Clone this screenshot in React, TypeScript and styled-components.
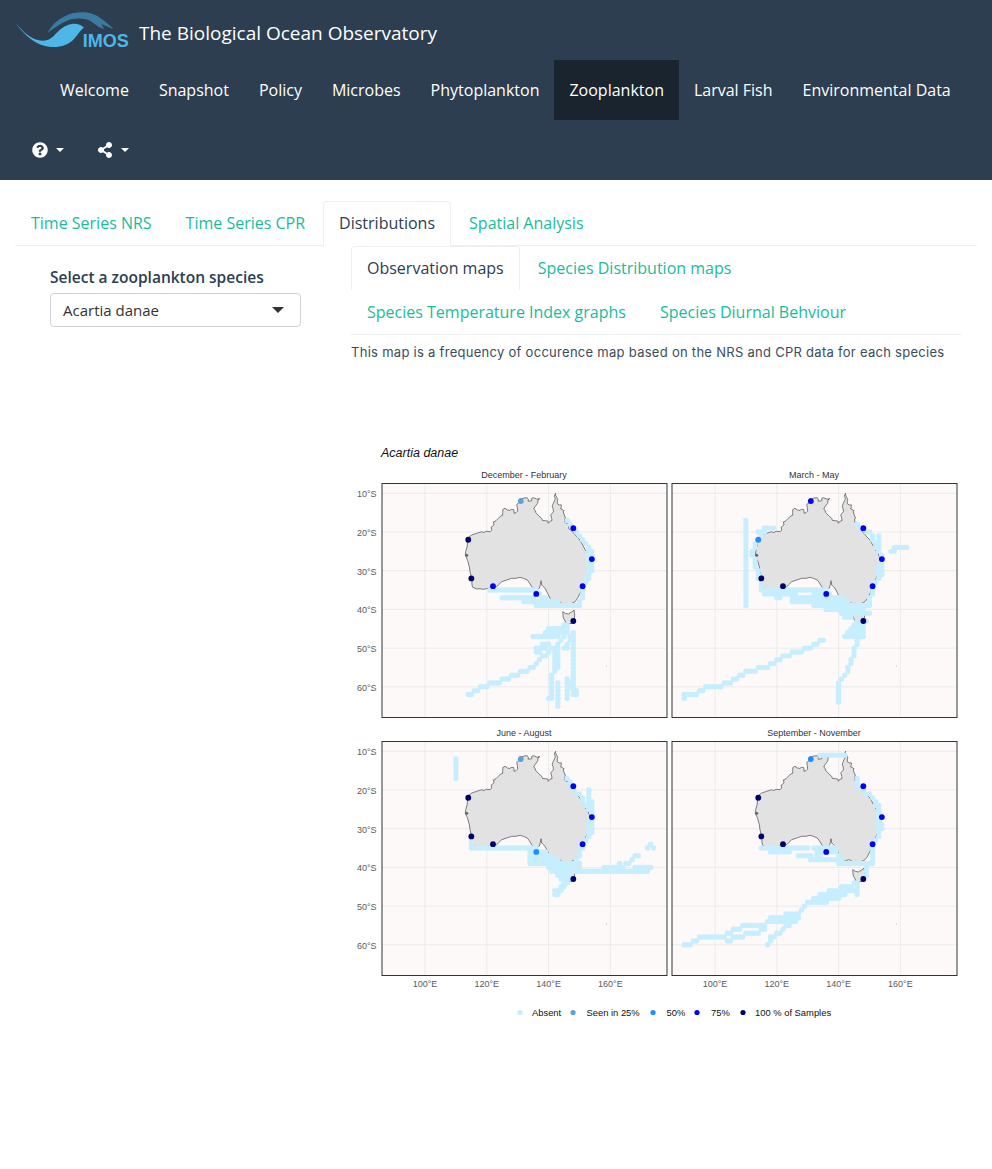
import { createGlobalStyle, styled } from "styled-components";
import { FaQuestionCircle, FaShareAlt } from "react-icons/fa";

const GlobalStyle = createGlobalStyle`
  html, body {
    margin: 0;
    padding: 0;
    background: #fff;
    font-family: "Open Sans", "Liberation Sans", sans-serif;
    font-size: 16px;
    color: #2c3e50;
  }
`;

const Header = styled.header`
  background: #2c3e50;
  height: 180px;
`;

const BrandRow = styled.div`
  display: flex;
  align-items: flex-start;
  height: 60px;
  padding: 5px 0 0 10px;
  box-sizing: border-box;
`;

const BrandTitle = styled.span`
  margin: 14px 0 0 4px;
  font-size: 19px;
  line-height: 28px;
  color: #fff;
`;

const NavRow = styled.nav`
  display: flex;
  height: 60px;
  padding-left: 45px;
`;

const NavLink = styled.a<{ $active?: boolean }>`
  padding: 0 15px;
  line-height: 60px;
  font-size: 16px;
  color: #fff;
  background: ${({ $active }) => ($active ? "#1a242f" : "transparent")};
`;

const IconRow = styled.div`
  display: flex;
  height: 60px;
  padding-left: 17px;
`;

const IconItem = styled.a`
  display: flex;
  align-items: center;
  gap: 8px;
  width: 65px;
  padding-left: 15px;
  box-sizing: border-box;
  color: #fff;
  font-size: 16px;
`;

const Caret = styled.span`
  width: 0;
  height: 0;
  border-left: 4px solid transparent;
  border-right: 4px solid transparent;
  border-top: 4px solid #fff;
`;

const Content = styled.main`
  padding: 21px 15px 0;
`;

const TabRow = styled.div`
  display: flex;
  gap: 2px;
  border-bottom: 1px solid #ecf0f1;
`;

const SubTabRow = styled.div`
  display: flex;
  flex-wrap: wrap;
  column-gap: 2px;
  border-bottom: 1px solid #ecf0f1;
`;

const Tab = styled.a<{ $active?: boolean }>`
  padding: 9px 15px;
  margin-bottom: -1px;
  font-size: 16px;
  line-height: 25px;
  border: 1px solid ${({ $active }) => ($active ? "#ecf0f1" : "transparent")};
  border-bottom-color: ${({ $active }) => ($active ? "#fff" : "transparent")};
  border-radius: 4px 4px 0 0;
  background: ${({ $active }) => ($active ? "#fff" : "transparent")};
  color: ${({ $active }) => ($active ? "#2c3e50" : "#18bc9c")};
`;

const SubTab = styled(Tab)`
  height: 44px;
  box-sizing: border-box;
  margin-bottom: 0;
`;

const Columns = styled.div`
  display: flex;
`;

const Sidebar = styled.aside`
  width: 336px;
  box-sizing: border-box;
  padding: 19px 0 0 35px;
`;

const FieldLabel = styled.div`
  font-size: 15.5px;
  font-weight: 600;
  line-height: 24px;
  margin-bottom: 4px;
  color: #2c3e50;
`;

const SelectBox = styled.div`
  display: flex;
  align-items: center;
  justify-content: space-between;
  width: 251px;
  height: 34px;
  box-sizing: border-box;
  padding: 0 16px 0 12px;
  border: 1px solid #ced4da;
  border-radius: 4px;
  font-size: 15px;
  color: #333;
`;

const SelectCaret = styled.span`
  width: 0;
  height: 0;
  border-left: 6px solid transparent;
  border-right: 6px solid transparent;
  border-top: 6px solid #333;
`;

const MainColumn = styled.section`
  width: 610px;
`;

const Intro = styled.p`
  margin: 7px 0 78px;
  font-family: Inter, "Open Sans", sans-serif;
  font-size: 13px;
  letter-spacing: 0.28px;
  line-height: 20px;
  color: #3b4c5c;
`;

const PlotSvg = styled.svg`
  display: block;
  font-family: "Liberation Sans", Arial, sans-serif;
`;

type LonLat = [number, number];

// expand a path of lon/lat waypoints to the 1 degree survey cells it crosses
function track(...paths: LonLat[][]): LonLat[] {
  const seen = new Map<string, LonLat>();
  paths.forEach((path) => {
    path.forEach((p, i) => {
      const next = path[i + 1] ?? p;
      const steps = Math.max(1, Math.ceil(Math.max(Math.abs(next[0] - p[0]), Math.abs(next[1] - p[1]))));
      for (let s = 0; s <= steps; s++) {
        const lon = Math.round(p[0] + ((next[0] - p[0]) * s) / steps);
        const lat = Math.round(p[1] + ((next[1] - p[1]) * s) / steps);
        seen.set(`${lon}:${lat}`, [lon, lat]);
      }
    });
  });
  return [...seen.values()];
}

const row = (lat: number, from: number, to: number): LonLat[] => [
  [from, lat],
  [to, lat],
];

const lonX = (lon: number) => 43.5 + (lon - 100) * 3.09;
const latY = (lat: number) => 10.3 + (lat - 10) * 3.87;

const SEEN = "#5ba3d6";
const MID = "#1e8fff";
const BLUE = "#0000ff";
const NAVY = "#00006b";
const ABSENT = "#c6eeff";

const STATIONS: LonLat[] = [
  [131, 12],
  [148, 19],
  [114, 22],
  [154, 27],
  [115, 32],
  [122, 34],
  [151, 34],
  [136, 36],
  [148, 43],
];

const COAST = [
  [347, 10], [350, 22], [352, 32], [358, 45], [364, 50], [366, 58], [372, 62], [373, 75], [374, 87], [380, 100], [386, 106], [392, 120],
  [402, 130], [410, 140], [420, 150], [428, 165], [436, 180], [444, 190], [450, 205], [453, 225], [448, 240], [445, 252], [436, 270], [430, 285],
  [426, 298], [420, 310], [412, 326], [405, 335], [395, 340], [385, 345], [376, 340], [370, 343], [362, 337], [355, 335], [345, 340], [338, 333],
  [330, 325], [322, 308], [315, 295], [308, 288], [305, 285], [303, 272], [301, 284], [298, 295], [290, 298], [285, 305], [281, 295], [275, 290],
  [268, 278], [262, 270], [250, 265], [240, 262], [228, 265], [215, 265], [200, 270], [185, 275], [175, 285], [165, 295], [150, 294], [130, 298],
  [120, 296], [110, 297], [98, 292], [96, 285], [95, 266], [90, 245], [88, 230], [83, 212], [80, 205], [76, 196], [77, 185], [82, 168],
  [82, 150], [88, 140], [95, 135], [110, 130], [125, 125], [140, 124], [155, 120], [158, 108], [160, 95], [168, 92], [175, 85], [182, 78],
  [188, 68], [195, 55], [205, 60], [215, 58], [222, 66], [228, 68], [232, 52], [235, 40], [240, 25], [252, 24], [265, 28], [270, 33],
  [275, 25], [290, 27], [298, 24], [294, 36], [285, 50], [283, 58], [285, 65], [295, 76], [305, 85], [316, 92], [325, 100], [331, 93],
  [335, 85], [336, 70], [339, 55], [340, 40], [345, 22],
];

const TASMANIA = [
  [368, 365], [376, 370], [385, 372], [395, 366], [402, 360], [404, 375], [403, 386], [396, 400], [386, 401], [378, 400], [374, 390], [370, 384],
];

// coast was traced on a 3x view of the first panel; the northern half gets small
// notches added between the traced points because the real shoreline is rough there
const toPoints = (pts: number[][]) =>
  pts
    .flatMap(([x, y], i) => {
      const [nx, ny] = pts[(i + 1) % pts.length];
      const rough = y < 130 && ny < 130;
      const mid = [(x + nx) / 2 + (i % 2 ? 3 : -3), (y + ny) / 2 + (i % 3 ? 3 : -3)];
      return rough ? [[x, y], mid] : [[x, y]];
    })
    .map(([x, y]) => `${(58.5 + x / 3).toFixed(1)},${(7 + y / 3).toFixed(1)}`)
    .join(" ");

type FacetData = {
  title: string;
  colors: string[];
  absent: LonLat[];
};

const FACETS: FacetData[] = [
  {
    title: "December - February",
    colors: [SEEN, BLUE, NAVY, BLUE, NAVY, BLUE, BLUE, BLUE, NAVY],
    absent: track(
      [[146, 17], [148, 19], [150, 21], [152, 23], [153, 24], [154, 25], [154, 30], [152, 33], [151, 34], [151, 37], [150, 38]],
      [[153, 25], [153, 31], [152, 32]],
      row(35, 121, 136),
      row(37, 125, 135),
      row(38, 132, 143),
      row(39, 136, 150),
      [[136, 35], [141, 39]],
      row(44, 145, 146),
      row(45, 140, 146),
      row(46, 139, 146),
      row(47, 135, 143),
      [[114, 62], [116, 61], [119, 60], [122, 59], [126, 58], [132, 56], [135, 55], [138, 52], [140, 51], [144, 48], [146, 45]],
      [[148, 46], [148, 60], [149, 62]],
      [[147, 59], [148, 62]],
      [[146, 58], [146, 63]],
      [[143, 59], [143, 65]],
      [[142, 50], [141, 63], [140, 63]],
      [[143, 49], [143, 55], [142, 55]],
      [[145, 50], [146, 50], [147, 47]],
      [[136, 51], [138, 50], [140, 49]],
      [[136, 50], [139, 49]],
    ),
  },
  {
    title: "March - May",
    colors: [BLUE, BLUE, MID, BLUE, NAVY, NAVY, BLUE, BLUE, NAVY],
    absent: track(
      [[110, 17], [110, 39]],
      [[119, 19], [116, 19], [115, 20], [114, 22], [112, 25], [113, 28], [114, 31], [115, 34], [116, 36]],
      row(20, 114, 116),
      row(35, 115, 136),
      row(36, 116, 126),
      row(36, 132, 137),
      row(37, 120, 121),
      row(37, 125, 141),
      row(38, 125, 143),
      row(39, 132, 150),
      row(40, 136, 148),
      row(41, 141, 150),
      row(42, 142, 144),
      row(43, 146, 149),
      [[146, 18], [148, 19], [151, 21], [152, 24]],
      [[153, 21], [153, 25], [154, 26], [154, 31]],
      [[153, 29], [153, 32], [151, 34], [150, 38], [149, 39]],
      row(24, 158, 162),
      row(25, 157, 158),
      row(44, 145, 148),
      row(45, 144, 148),
      row(46, 143, 148),
      row(47, 142, 148),
      [[146, 47], [145, 51], [144, 53], [143, 56], [141, 58], [140, 59], [140, 64]],
      [[90, 63], [90, 62], [93, 62], [97, 60], [101, 60], [107, 58], [110, 56], [116, 55], [120, 53], [126, 51], [130, 50], [135, 48]],
    ),
  },
  {
    title: "June - August",
    colors: [SEEN, BLUE, NAVY, BLUE, NAVY, NAVY, BLUE, MID, NAVY],
    absent: track(
      [[110, 12], [110, 17]],
      [[115, 33], [115, 35]],
      row(35, 115, 136),
      row(36, 134, 139),
      row(37, 134, 141),
      row(38, 134, 143),
      row(39, 134, 150),
      row(40, 140, 150),
      row(41, 141, 172),
      row(40, 158, 164),
      row(40, 168, 173),
      row(42, 143, 147),
      row(43, 144, 147),
      row(44, 145, 146),
      row(45, 144, 145),
      row(46, 142, 144),
      row(47, 142, 143),
      [[146, 17], [148, 20], [150, 21], [151, 23], [153, 25]],
      [[153, 20], [153, 25]],
      [[154, 23], [154, 26]],
      [[154, 28], [154, 31], [152, 33], [151, 34], [150, 36], [149, 38]],
      [[153, 28], [153, 31]],
      [[163, 39], [163, 39]],
      row(39, 165, 166),
      [[167, 38], [168, 37], [169, 37]],
      [[172, 35], [173, 34], [174, 35]],
    ),
  },
  {
    title: "September - November",
    colors: [MID, BLUE, NAVY, BLUE, NAVY, NAVY, BLUE, BLUE, NAVY],
    absent: track(
      row(11, 134, 142),
      [[146, 17], [146, 19], [148, 20], [151, 22], [152, 24]],
      [[153, 24], [153, 28], [154, 30]],
      [[153, 28], [153, 32], [151, 34], [151, 37], [150, 39]],
      row(35, 115, 130),
      row(36, 118, 124),
      row(35, 132, 139),
      row(36, 133, 138),
      row(37, 127, 131),
      row(37, 133, 134),
      row(38, 131, 141),
      row(39, 140, 151),
      [[138, 35], [141, 39]],
      [[149, 40], [149, 42]],
      [[90, 60], [92, 60], [93, 59], [96, 58], [102, 58], [106, 56], [110, 55], [116, 55], [118, 53], [127, 52], [129, 50], [132, 48], [138, 46], [143, 45], [146, 44]],
      [[104, 59], [106, 58], [112, 57], [116, 56]],
      [[117, 60], [118, 58], [122, 56], [125, 54]],
      row(53, 118, 127),
      row(54, 118, 126),
      row(49, 131, 136),
      row(48, 132, 140),
      row(47, 136, 142),
      row(46, 138, 146),
      [[146, 44], [146, 47]],
    ),
  },
];

const LON_TICKS = [100, 120, 140, 160];
const LAT_TICKS = [10, 20, 30, 40, 50, 60];
const PANEL_W = 285;
const PANEL_H = 234;

function Facet({ data, x, y, showLat, showLon }: { data: FacetData; x: number; y: number; showLat: boolean; showLon: boolean }) {
  return (
    <g transform={`translate(${x} ${y})`}>
      <text x={PANEL_W / 2} y={-5} fontSize="9" fill="#333" textAnchor="middle">
        {data.title}
      </text>
      <rect width={PANEL_W} height={PANEL_H} fill="#fdf9f8" />
      {LON_TICKS.map((lon) => (
        <line key={lon} x1={lonX(lon)} x2={lonX(lon)} y1={0} y2={PANEL_H} stroke="#ebebeb" />
      ))}
      {LAT_TICKS.map((lat) => (
        <line key={lat} x1={0} x2={PANEL_W} y1={latY(lat)} y2={latY(lat)} stroke="#ebebeb" />
      ))}
      <polygon points={toPoints(COAST)} fill="#e2e2e2" stroke="#5e5e5e" strokeWidth="0.8" />
      <polygon points={toPoints(TASMANIA)} fill="#e2e2e2" stroke="#5e5e5e" strokeWidth="0.8" />
      <circle cx={lonX(113.5)} cy={latY(26)} r={1.5} fill="#666" />
      <circle cx={lonX(158.8)} cy={latY(54.6)} r={0.4} fill="#555" />
      {data.absent.map(([lon, lat]) => (
        <circle key={`${lon}:${lat}`} cx={lonX(lon)} cy={latY(lat)} r={2.7} fill={ABSENT} />
      ))}
      {STATIONS.map(([lon, lat], i) => (
        <circle key={`${lon}:${lat}`} cx={lonX(lon)} cy={latY(lat)} r={2.9} fill={data.colors[i]} />
      ))}
      <rect x={0.5} y={0.5} width={PANEL_W} height={PANEL_H} fill="none" stroke="#333" />
      {showLat &&
        LAT_TICKS.map((lat) => (
          <text key={lat} x={-5} y={latY(lat) + 4} fontSize="9" fill="#5a5a5a" textAnchor="end">
            {lat}°S
          </text>
        ))}
      {showLon &&
        LON_TICKS.map((lon) => (
          <text key={lon} x={lonX(lon)} y={PANEL_H + 12} fontSize="9" fill="#5a5a5a" textAnchor="middle">
            {lon}°E
          </text>
        ))}
    </g>
  );
}

const LEGEND = [
  { color: ABSENT, label: "Absent", dot: 169, text: 181 },
  { color: SEEN, label: "Seen in 25%", dot: 222, text: 235.5 },
  { color: MID, label: "50%", dot: 302, text: 315.5 },
  { color: BLUE, label: "75%", dot: 346, text: 360 },
  { color: NAVY, label: "100 % of Samples", dot: 392, text: 404 },
];

function SpeciesPlot() {
  return (
    <PlotSvg width="610" height="590" viewBox="0 0 610 590" role="img" aria-label="Acartia danae observation maps">
      <text x={30} y={17} fontSize="12.5" fontStyle="italic" fill="#111">
        Acartia danae
      </text>
      <Facet data={FACETS[0]} x={30.5} y={43} showLat showLon={false} />
      <Facet data={FACETS[1]} x={320.5} y={43} showLat={false} showLon={false} />
      <Facet data={FACETS[2]} x={30.5} y={301} showLat showLon />
      <Facet data={FACETS[3]} x={320.5} y={301} showLat={false} showLon />
      {LEGEND.map((item) => (
        <g key={item.label}>
          <circle cx={item.dot} cy={572.5} r={2.6} fill={item.color} />
          <text x={item.text} y={576} fontSize="9.4" fill="#111">
            {item.label}
          </text>
        </g>
      ))}
    </PlotSvg>
  );
}

function ImosLogo() {
  return (
    <svg width="125" height="50" viewBox="0 0 375 150" aria-label="IMOS">
      <path
        d="M112 85 C125 60 150 34 190 24 C225 18 255 24 275 42 C290 54 302 64 311 72 C298 68 285 62 274 57 C276 62 279 67 283 71 C270 70 258 60 245 50 C225 38 195 38 170 48 C148 57 128 72 112 85 Z"
        fill="#3c7ba1"
      />
      <path
        d="M15 52 C32 72 50 92 75 103 C95 111 115 109 132 92 C148 74 165 60 185 57 C200 55 214 60 222 68 C212 74 204 88 192 102 C175 120 150 128 122 126 C85 124 50 100 15 52 Z"
        fill="#4db7e8"
      />
      <text x={218} y={125} fontFamily="'Liberation Sans', Arial, sans-serif" fontSize="54" fontWeight="700" fill="#4db7e8">
        IMOS
      </text>
    </svg>
  );
}

const NAV_ITEMS = ["Welcome", "Snapshot", "Policy", "Microbes", "Phytoplankton", "Zooplankton", "Larval Fish", "Environmental Data"];
const TOP_TABS = ["Time Series NRS", "Time Series CPR", "Distributions", "Spatial Analysis"];
const SUB_TABS = ["Observation maps", "Species Distribution maps", "Species Temperature Index graphs", "Species Diurnal Behviour"];

export default function App() {
  return (
    <>
      <GlobalStyle />
      <Header>
        <BrandRow>
          <ImosLogo />
          <BrandTitle>The Biological Ocean Observatory</BrandTitle>
        </BrandRow>
        <NavRow>
          {NAV_ITEMS.map((item) => (
            <NavLink key={item} $active={item === "Zooplankton"}>
              {item}
            </NavLink>
          ))}
        </NavRow>
        <IconRow>
          <IconItem>
            <FaQuestionCircle size={16} />
            <Caret />
          </IconItem>
          <IconItem>
            <FaShareAlt size={16} />
            <Caret />
          </IconItem>
        </IconRow>
      </Header>
      <Content>
        <TabRow>
          {TOP_TABS.map((tab) => (
            <Tab key={tab} $active={tab === "Distributions"}>
              {tab}
            </Tab>
          ))}
        </TabRow>
        <Columns>
          <Sidebar>
            <FieldLabel>Select a zooplankton species</FieldLabel>
            <SelectBox>
              Acartia danae
              <SelectCaret />
            </SelectBox>
          </Sidebar>
          <MainColumn>
            <SubTabRow>
              {SUB_TABS.map((tab) => (
                <SubTab key={tab} $active={tab === "Observation maps"}>
                  {tab}
                </SubTab>
              ))}
            </SubTabRow>
            <Intro>This map is a frequency of occurence map based on the NRS and CPR data for each species</Intro>
            <SpeciesPlot />
          </MainColumn>
        </Columns>
      </Content>
    </>
  );
}
